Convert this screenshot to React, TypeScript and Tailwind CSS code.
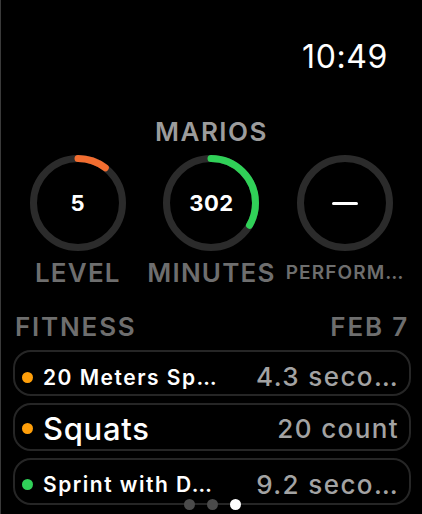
import React from "react";

function Ring({ value, color, progress }: { value: React.ReactNode; color?: string; progress?: number }) {
  const r = 44.5;
  const c = 2 * Math.PI * r;
  return (
    <div className="relative w-[96px] h-[96px]">
      <svg width="96" height="96" viewBox="0 0 96 96" className="absolute inset-0">
        <circle cx="48" cy="48" r={r} fill="none" stroke="#2b2b2b" strokeWidth="7" />
        {color && progress ? (
          <circle
            cx="48"
            cy="48"
            r={r}
            fill="none"
            stroke={color}
            strokeWidth="7"
            strokeLinecap="round"
            strokeDasharray={`${c * progress} ${c}`}
            transform="rotate(-90 48 48)"
          />
        ) : null}
      </svg>
      <div className="absolute inset-0 flex items-center justify-center text-white font-bold text-[22px] leading-none tracking-[0.5px]">
        {value}
      </div>
    </div>
  );
}

function Row({
  dot,
  title,
  value,
  big,
  h,
  pt,
}: {
  dot: string;
  title: string;
  value: string;
  big?: boolean;
  h: string;
  pt: string;
}) {
  return (
    <div className={`flex items-center border-2 border-[#262626] rounded-[18px] pl-[7px] pr-[10px] ${h} ${pt}`}>
      <div className={`w-[11px] h-[11px] rounded-full shrink-0 ${dot}`} />
      <div
        className={
          big
            ? "ml-[10px] text-white font-medium text-[31px] leading-none tracking-[0.7px]"
            : "ml-[10px] text-white font-semibold text-[21px] leading-none tracking-[1.5px]"
        }
      >
        {title}
      </div>
      <div className="ml-auto text-[#a3a3a3] font-medium text-[26px] leading-none tracking-[1.4px]">{value}</div>
    </div>
  );
}

export default function App() {
  return (
    <div className="w-[422px] h-[514px] bg-black border-l border-[#3a3a3a] overflow-hidden relative flex flex-col font-[Inter,sans-serif]">
      <div className="mt-[41px] h-[32px] text-[32px] leading-[32px] text-white text-right pr-[34px] tracking-[0.6px]">
        10:49
      </div>
      <div className="mt-[46px] h-[26px] text-[26px] leading-[26px] font-semibold text-center text-[#9c9c9c] tracking-[1.5px]">
        MARIOS
      </div>
      <div className="mt-[10px] grid grid-cols-3 px-[10px]">
        <div className="flex justify-center">
          <Ring value="5" color="#f26d30" progress={0.105} />
        </div>
        <div className="flex justify-center">
          <Ring value="302" color="#30d158" progress={0.333} />
        </div>
        <div className="flex justify-center">
          <Ring value={<div className="w-[26px] h-[3px] bg-white rounded-full" />} />
        </div>
      </div>
      <div className="mt-[9px] grid grid-cols-3 px-[10px] h-[25px] items-center">
        <div className="text-center text-[26px] leading-[25px] font-semibold text-[#6e6e6e] tracking-[1.2px] whitespace-nowrap">
          LEVEL
        </div>
        <div className="text-center text-[26px] leading-[25px] font-semibold text-[#6e6e6e] tracking-[1.2px] whitespace-nowrap">
          MINUTES
        </div>
        <div className="text-center text-[19px] leading-[18px] font-semibold text-[#6e6e6e] tracking-[1.1px] whitespace-nowrap">
          PERFORM…
        </div>
      </div>
      <div className="mt-[29px] h-[25px] flex justify-between pl-[14px] pr-[13px] text-[26px] leading-[25px] font-semibold text-[#6e6e6e] tracking-[1.8px]">
        <span>FITNESS</span>
        <span>FEB 7</span>
      </div>
      <div className="mt-[11px] flex flex-col gap-[7px] pl-[12px] pr-[11px]">
        <Row dot="bg-[#ff9f0a]" title="20 Meters Sp…" value="4.3 seco…" h="h-[46px]" pt="pt-[8px]" />
        <Row dot="bg-[#ff9f0a]" title="Squats" value="20 count" big h="h-[48px]" pt="pt-[3px]" />
        <Row dot="bg-[#30d158]" title="Sprint with D…" value="9.2 seco…" h="h-[47px]" pt="pt-[6px]" />
      </div>
      <div className="absolute left-[183px] top-[499px] flex gap-[12px]">
        <div className="w-[11px] h-[11px] rounded-full bg-[#4a4a4a]" />
        <div className="w-[11px] h-[11px] rounded-full bg-[#4a4a4a]" />
        <div className="w-[11px] h-[11px] rounded-full bg-white" />
      </div>
    </div>
  );
}
